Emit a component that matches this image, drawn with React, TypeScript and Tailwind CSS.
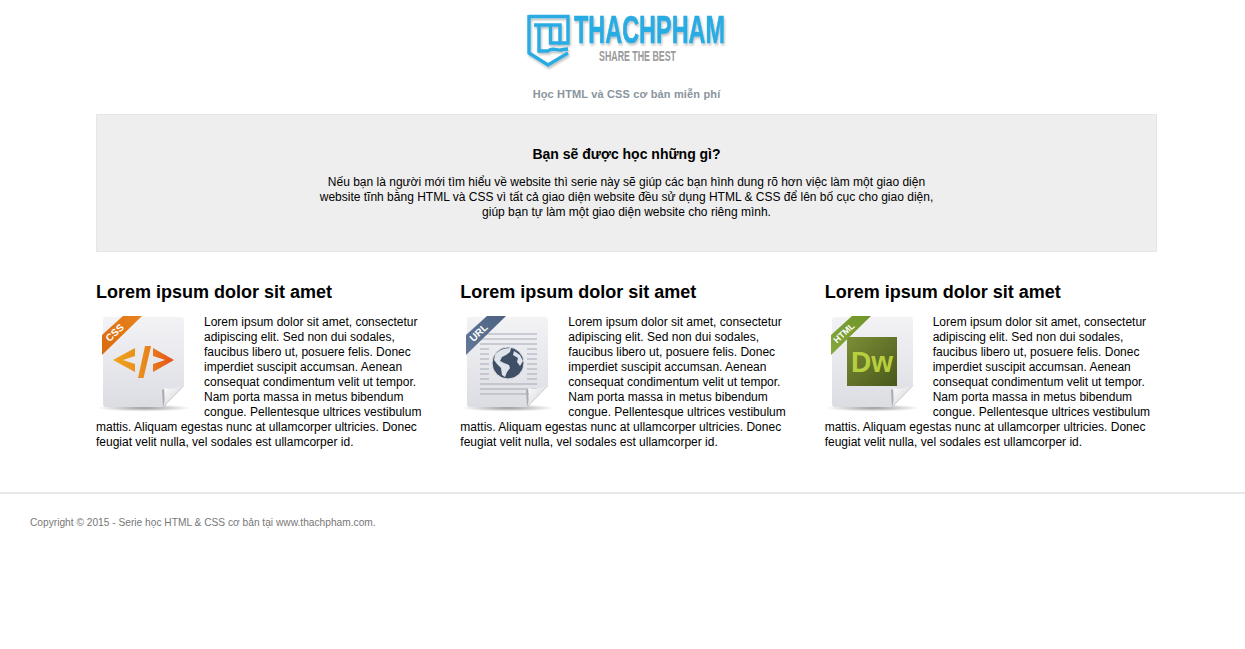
import { ReactNode } from "react";

const lorem =
  "Lorem ipsum dolor sit amet, consectetur adipiscing elit. Sed non dui sodales, faucibus libero ut, posuere felis. Donec imperdiet suscipit accumsan. Aenean consequat condimentum velit ut tempor. Nam porta massa in metus bibendum congue. Pellentesque ultrices vestibulum mattis. Aliquam egestas nunc at ullamcorper ultricies. Donec feugiat velit nulla, vel sodales est ullamcorper id.";

function Logo() {
  return (
    <svg width="205" height="60" viewBox="0 0 205 60" className="ml-[2px] block">
      <defs>
        <filter id="logoShadow" x="-5%" y="-5%" width="110%" height="125%">
          <feDropShadow dx="1" dy="2" stdDeviation="1.2" floodColor="#000" floodOpacity="0.25" />
        </filter>
      </defs>
      <g filter="url(#logoShadow)">
        <g fill="none" stroke="#29abe2" strokeWidth="3.4">
          <path d="M4 4.5H43V31H35V13H9" />
          <path d="M4 3V41L23 53L43 41" />
          <path d="M14 13V39H23C28 35 32 39 36 38C38 37.5 40 37 43 37" />
          <path d="M25.5 13V31H35" />
        </g>
        <text
          x="49"
          y="31"
          fontFamily="'Liberation Sans', sans-serif"
          fontWeight="700"
          fontSize="39"
          fill="#29abe2"
          stroke="#29abe2"
          strokeWidth="0.6"
          textLength="151"
          lengthAdjust="spacingAndGlyphs"
        >
          THACHPHAM
        </text>
      </g>
      <text
        x="74"
        y="49"
        fontFamily="'Liberation Sans', sans-serif"
        fontWeight="700"
        fontSize="14.5"
        fill="#9a9a9a"
        textLength="77"
        lengthAdjust="spacingAndGlyphs"
      >
        SHARE THE BEST
      </text>
    </svg>
  );
}

function FileIcon({
  id,
  label,
  ribbon,
  ribbonDark,
  labelSize,
  children,
}: {
  id: string;
  label: string;
  ribbon: string;
  ribbonDark: string;
  labelSize: number;
  children: ReactNode;
}) {
  return (
    <svg width="100" height="100" viewBox="0 0 100 100" className="float-left mr-2 block">
      <defs>
        <linearGradient id={id + "Page"} x1="0" y1="0" x2="0" y2="1">
          <stop offset="0" stopColor="#f3f3f6" />
          <stop offset="1" stopColor="#dcdde3" />
        </linearGradient>
        <linearGradient id={id + "Fold"} x1="0" y1="0" x2="1" y2="1">
          <stop offset="0" stopColor="#ffffff" />
          <stop offset="0.5" stopColor="#e6e6e8" />
          <stop offset="1" stopColor="#a4a6ac" />
        </linearGradient>
        <linearGradient id={id + "Ribbon"} x1="0" y1="1" x2="1" y2="0">
          <stop offset="0" stopColor={ribbonDark} />
          <stop offset="1" stopColor={ribbon} />
        </linearGradient>
        <radialGradient id={id + "Shadow"}>
          <stop offset="0" stopColor="#777" stopOpacity="0.75" />
          <stop offset="1" stopColor="#777" stopOpacity="0" />
        </radialGradient>
      </defs>
      <ellipse cx="48" cy="94" rx="47" ry="3.5" fill={`url(#${id}Shadow)`} />
      <path d="M10 3H85Q88 3 88 6V71L67 93H10Q7 93 7 90V6Q7 3 10 3Z" fill={`url(#${id}Page)`} />
      {children}
      <path d="M66 76L67 93L70 91C68 86 68 80 68 75Z" fill="#a9abb1" />
      <path d="M88 71C81 74 74 76 68 74C70 80 69 87 67 93Z" fill={`url(#${id}Fold)`} />
      <path d="M67.5 92.5L88 71.5" stroke="#c9cbd0" strokeWidth="1" />
      <path d="M6 21L27 2H46L6 41Z" fill={`url(#${id}Ribbon)`} />
      <text
        x="19"
        y="22"
        textAnchor="middle"
        transform="rotate(-43 19 19)"
        fontFamily="'Liberation Sans', sans-serif"
        fontWeight="700"
        fontSize={labelSize}
        fill="#fff"
      >
        {label}
      </text>
    </svg>
  );
}

function CssGlyph() {
  return (
    <g>
      <defs>
        <linearGradient id="codeFill" gradientUnits="userSpaceOnUse" x1="17" y1="0" x2="78" y2="0">
          <stop offset="0" stopColor="#eca51d" />
          <stop offset="0.5" stopColor="#e98a1b" />
          <stop offset="1" stopColor="#e4501a" />
        </linearGradient>
      </defs>
      <path d="M17 46L39 34V42L27 46L39 50V58Z" fill="url(#codeFill)" />
      <path d="M49 32H55L47.5 64H42Z" fill="url(#codeFill)" />
      <path d="M57 34L78 46L57 58V50L69 46L57 42Z" fill="url(#codeFill)" />
    </g>
  );
}

function UrlGlyph() {
  const full = [20, 25, 30, 70, 75, 80];
  const short = [35, 40, 45, 50, 55, 60, 65];
  return (
    <g>
      <g stroke="#a3aab6" strokeWidth="1.2">
        {full.map((y) => (
          <path key={y} d={`M20 ${y}H77`} />
        ))}
        {short.map((y) => (
          <path key={y} d={`M20 ${y}H29M67 ${y}H77`} />
        ))}
      </g>
      <circle cx="48" cy="49" r="16" fill="#3f5066" stroke="#dfe2e8" strokeWidth="1" />
      <path
        d="M35 41C38 36 45 34 51 34L50 38L46 41L42 43L40 47L44 49L49 51L50 54L47 58L45 63L42 61L41 54L37 50L34 46Z"
        fill="#dfe3ea"
      />
      <path d="M54 37L60 41L63 47L60 52L57 48L58 44L53 41Z" fill="#dfe3ea" />
    </g>
  );
}

function DwGlyph() {
  return (
    <g>
      <defs>
        <linearGradient id="dwFill" x1="0" y1="0" x2="1" y2="1">
          <stop offset="0" stopColor="#7d8e36" />
          <stop offset="1" stopColor="#48581c" />
        </linearGradient>
      </defs>
      <rect x="22" y="23" width="50" height="49" fill="url(#dwFill)" />
      <text
        x="26"
        y="58"
        fontFamily="'Liberation Sans', sans-serif"
        fontWeight="700"
        fontSize="30"
        fill="#b7cf3e"
        textLength="42"
        lengthAdjust="spacingAndGlyphs"
      >
        Dw
      </text>
    </g>
  );
}

function Column({ icon }: { icon: ReactNode }) {
  return (
    <div className="w-[332.4px]">
      <h2 className="text-[18px] leading-[20px] font-bold text-black">Lorem ipsum dolor sit amet</h2>
      <div className="mt-[12px] text-[12px] leading-[15px] text-black">
        {icon}
        <p className="pt-[1px]">{lorem}</p>
      </div>
    </div>
  );
}

export default function App() {
  return (
    <div className="min-h-[649px] bg-white font-['Liberation_Sans',Arial,sans-serif]">
      <div className="ml-[96px] w-[1061px]">
        <header className="flex flex-col items-center pt-3">
          <Logo />
          <p className="mt-[15px] text-[11px] leading-[15px] font-bold tracking-[0.15px] text-[#8a949c]">
            Học HTML và CSS cơ bản miễn phí
          </p>
        </header>
        <section className="mt-[12px] flex h-[138px] flex-col items-center border border-[#e6e6e6] bg-[#eeeeee] pt-[31px] text-center text-black">
          <h1 className="text-[14px] leading-[16px] font-bold">Bạn sẽ được học những gì?</h1>
          <p className="mt-[13px] text-[12px] leading-[15px]">
            Nếu bạn là người mới tìm hiểu về website thì serie này sẽ giúp các bạn hình dung rõ hơn việc làm một giao diện
            <br />
            website tĩnh bằng HTML và CSS vì tất cả giao diện website đều sử dụng HTML &amp; CSS để lên bố cục cho giao diện,
            <br />
            giúp bạn tự làm một giao diện website cho riêng mình.
          </p>
        </section>
        <div className="mt-[30px] flex gap-x-[32px]">
          <Column
            icon={
              <FileIcon id="css" label="CSS" ribbon="#e8821e" ribbonDark="#d96a0c" labelSize={10}>
                <CssGlyph />
              </FileIcon>
            }
          />
          <Column
            icon={
              <FileIcon id="url" label="URL" ribbon="#4d6280" ribbonDark="#64799a" labelSize={10}>
                <UrlGlyph />
              </FileIcon>
            }
          />
          <Column
            icon={
              <FileIcon id="html" label="HTML" ribbon="#6f9428" ribbonDark="#86a83c" labelSize={9}>
                <DwGlyph />
              </FileIcon>
            }
          />
        </div>
      </div>
      <footer className="mt-[42px] border-t-2 border-[#e8e8e8] px-[30px] pt-[21px] text-[10.2px] leading-[15px] text-[#777]">
        Copyright © 2015 - Serie học HTML &amp; CSS cơ bản tại www.thachpham.com.
      </footer>
    </div>
  );
}
